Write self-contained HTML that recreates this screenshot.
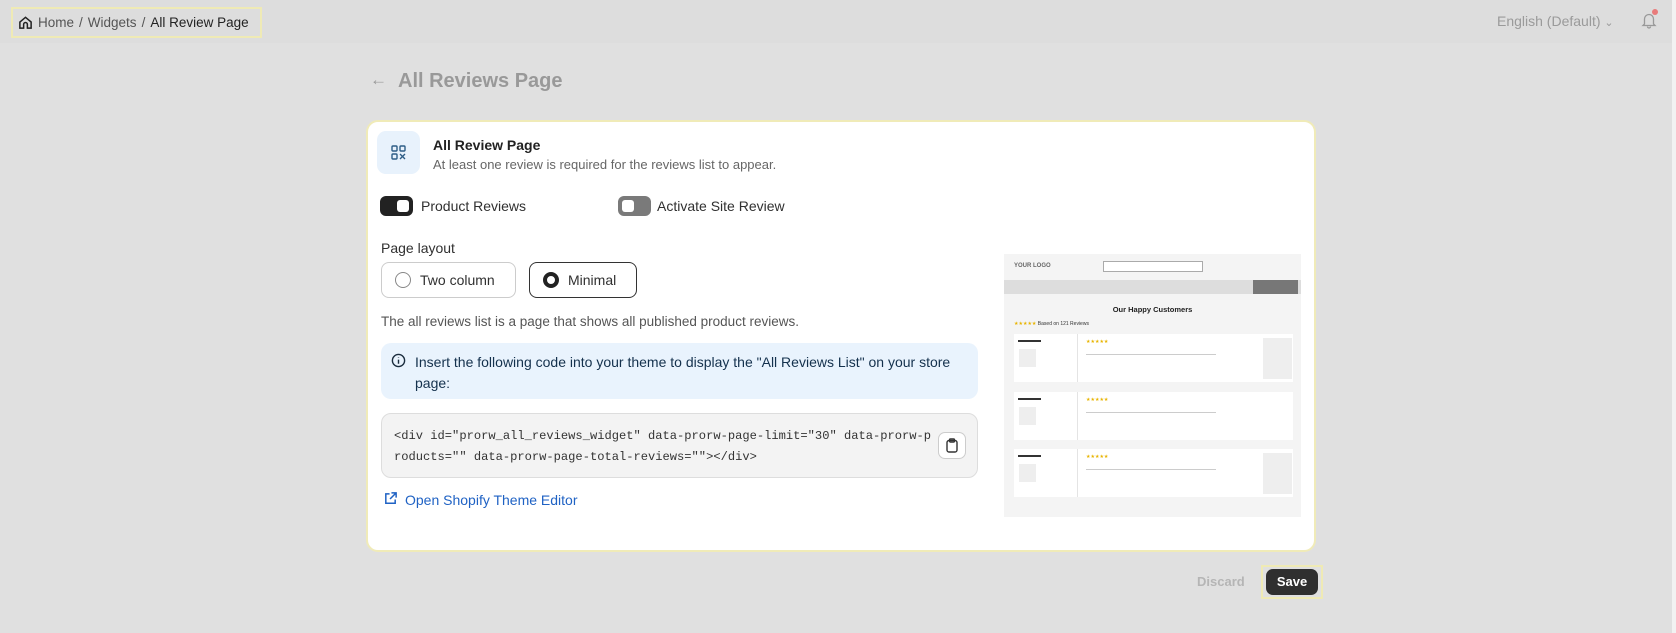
<!DOCTYPE html>
<html><head><meta charset="utf-8"><style>
*{box-sizing:border-box;margin:0;padding:0}
body{width:1676px;height:633px;background:#e0e0e0;font-family:"Liberation Sans",sans-serif;position:relative;overflow:hidden;color:#303030}
.abs{position:absolute}
.bc{left:11px;top:7px;width:251px;height:31px;border:2px solid #efeab5;font-size:13.5px;color:#555;display:flex;align-items:center;padding-left:5px;gap:5px}
.card{left:366px;top:120px;width:950px;height:432px;background:#fff;border:2px solid #f0ebb8;border-radius:12px}
.tog{width:33px;height:20px;border-radius:6px;position:absolute}
.tog i{position:absolute;right:4px;top:4px;width:12px;height:12px;background:#fff;border-radius:3px}
.rb{position:absolute;height:36px;border:1px solid #ccc;border-radius:8px;display:flex;align-items:center;padding-left:13px;gap:9px;font-size:14px}
.t14{font-size:14px}
</style></head><body>
<div class="abs" style="left:0;top:0;width:1676px;height:43px;background:#dddddd"></div>
<div class="abs" style="left:1672px;top:0;width:4px;height:633px;background:#f2f2f2"></div>
<div class="abs bc">
<svg width="15" height="15" viewBox="0 0 16 16" fill="none" stroke="#222" stroke-width="1.6"><path d="M2 7.5L8 2.5l6 5V14h-4v-4a2 2 0 0 0-4 0v4H2z"/></svg>
<span>Home</span><span>/</span><span>Widgets</span><span>/</span><span style="color:#222">All Review Page</span></div>
<div class="abs" style="left:1497px;top:13px;font-size:14px;color:#9a9a9a">English (Default) <span style="font-size:11px">&#8964;</span></div>
<svg class="abs" style="left:1640px;top:11px" width="18" height="18" viewBox="0 0 18 18" fill="none" stroke="#999" stroke-width="1.3"><path d="M4.5 13V8a4.5 4.5 0 0 1 9 0v5l1.5 1.5h-12z M7.5 15.5a1.5 1.5 0 0 0 3 0"/></svg>
<div class="abs" style="left:1652px;top:9px;width:6px;height:6px;border-radius:3px;background:#e87a7a"></div>
<div class="abs" style="left:370px;top:70px;font-size:17px;color:#999">&#8592;</div>
<div class="abs" style="left:398px;top:70px;font-size:20px;font-weight:bold;color:#999">All Reviews Page</div>

<div class="abs card"></div>
<div class="abs" style="left:377px;top:131px;width:43px;height:43px;border-radius:9px;background:#e8f2fc"></div>
<svg class="abs" style="left:391px;top:145px" width="15" height="15" viewBox="0 0 15 15" fill="none" stroke="#2e5d86" stroke-width="1.4"><rect x="1" y="1" width="5" height="5" rx="1"/><rect x="9" y="1" width="5" height="5" rx="1"/><rect x="1" y="9" width="5" height="5" rx="1"/><path d="M9 9l5 5M14 9l-5 5"/></svg>
<div class="abs" style="left:433px;top:137px;font-size:14px;font-weight:bold;color:#222">All Review Page</div>
<div class="abs" style="left:433px;top:157px;font-size:13px;color:#666">At least one review is required for the reviews list to appear.</div>
<div class="tog" style="left:380px;top:196px;background:#222"><i></i></div>
<div class="abs t14" style="left:421px;top:198px">Product Reviews</div>
<div class="tog" style="left:618px;top:196px;background:#7a7a7a"><i style="left:4px;right:auto"></i></div>
<div class="abs t14" style="left:657px;top:198px">Activate Site Review</div>
<div class="abs t14" style="left:381px;top:240px">Page layout</div>
<div class="rb" style="left:381px;top:262px;width:135px"><span style="width:16px;height:16px;border:1px solid #888;border-radius:50%"></span>Two column</div>
<div class="rb" style="left:529px;top:262px;width:108px;border-color:#333"><span style="width:16px;height:16px;border:4.5px solid #222;border-radius:50%"></span>Minimal</div>
<div class="abs" style="left:381px;top:314px;font-size:13.5px;color:#555">The all reviews list is a page that shows all published product reviews.</div>
<div class="abs" style="left:381px;top:343px;width:597px;height:56px;background:#e9f3fd;border-radius:10px"></div>
<svg class="abs" style="left:391px;top:353px" width="15" height="15" viewBox="0 0 16 16" fill="none" stroke="#1a2c3d" stroke-width="1.5"><circle cx="8" cy="8" r="6.5"/><path d="M8 7v4.5M8 4.5v.5"/></svg>
<div class="abs" style="left:415px;top:352px;width:555px;font-size:14px;line-height:21px;color:#14314d">Insert the following code into your theme to display the "All Reviews List" on your store page:</div>
<div class="abs" style="left:381px;top:413px;width:597px;height:65px;background:#f3f3f3;border:1px solid #ddd;border-radius:10px"></div>
<div class="abs" style="left:394px;top:426px;width:540px;font-family:'Liberation Mono',monospace;font-size:12.1px;line-height:21px;color:#333;word-break:break-all">&lt;div id="prorw_all_reviews_widget" data-prorw-page-limit="30" data-prorw-products="" data-prorw-page-total-reviews=""&gt;&lt;/div&gt;</div>
<div class="abs" style="left:938px;top:432px;width:28px;height:27px;background:#fff;border:1px solid #ccc;border-radius:7px"></div>
<svg class="abs" style="left:945px;top:438px" width="14" height="15" viewBox="0 0 14 15" fill="none" stroke="#333" stroke-width="1.4"><rect x="2" y="2.5" width="10" height="11.5" rx="2"/><rect x="4.5" y="1" width="5" height="3" rx="1"/></svg>
<svg class="abs" style="left:383px;top:491px" width="15" height="15" viewBox="0 0 16 16" fill="none" stroke="#1f62c4" stroke-width="1.6"><path d="M7 3H3v10h10V9M9 2h5v5M14 2L7.5 8.5"/></svg>
<div class="abs" style="left:405px;top:492px;font-size:14px;color:#1f62c4">Open Shopify Theme Editor</div>

<div class="abs" style="left:1004px;top:254px;width:297px;height:263px;background:#f4f4f4">
 <div class="abs" style="left:10px;top:9px;font-size:6px;font-weight:bold;color:#666">YOUR LOGO</div>
 <div class="abs" style="left:99px;top:7px;width:100px;height:11px;border:1px solid #aaa;background:#fff"></div>
 <div class="abs" style="left:0;top:26px;width:297px;height:14px;background:#ddd"></div>
 <div class="abs" style="left:249px;top:26px;width:45px;height:14px;background:#777"></div>
 <div class="abs" style="left:0;top:51px;width:297px;text-align:center;font-size:7.5px;font-weight:bold;color:#222">Our Happy Customers</div>
 <div class="abs" style="left:10px;top:67px;font-size:5px;color:#333"><span style="color:#e8b400">★★★★★</span> Based on 121 Reviews</div>
 <div class="abs" style="left:10px;top:80px;width:279px;height:48px;background:#fff"><div class="abs" style="left:63px;top:0;width:1px;height:48px;background:#e4e4e4"></div><div class="abs" style="left:4px;top:6px;width:23px;height:2px;background:#333"></div><div class="abs" style="left:5px;top:15px;width:17px;height:18px;background:#eee"></div><div class="abs" style="left:249px;top:4px;width:29px;height:41px;background:#eee"></div><div class="abs" style="left:72px;top:20px;width:130px;height:1px;background:#ccc"></div><div class="abs" style="left:72px;top:5px;font-size:5px;color:#e8b400">★★★★★</div></div>
 <div class="abs" style="left:10px;top:138px;width:279px;height:48px;background:#fff"><div class="abs" style="left:63px;top:0;width:1px;height:48px;background:#e4e4e4"></div><div class="abs" style="left:4px;top:6px;width:23px;height:2px;background:#333"></div><div class="abs" style="left:5px;top:15px;width:17px;height:18px;background:#eee"></div><div class="abs" style="left:72px;top:20px;width:130px;height:1px;background:#ccc"></div><div class="abs" style="left:72px;top:5px;font-size:5px;color:#e8b400">★★★★★</div></div>
 <div class="abs" style="left:10px;top:195px;width:279px;height:48px;background:#fff"><div class="abs" style="left:63px;top:0;width:1px;height:48px;background:#e4e4e4"></div><div class="abs" style="left:4px;top:6px;width:23px;height:2px;background:#333"></div><div class="abs" style="left:5px;top:15px;width:17px;height:18px;background:#eee"></div><div class="abs" style="left:249px;top:4px;width:29px;height:41px;background:#eee"></div><div class="abs" style="left:72px;top:20px;width:130px;height:1px;background:#ccc"></div><div class="abs" style="left:72px;top:5px;font-size:5px;color:#e8b400">★★★★★</div></div>
</div>

<div class="abs" style="left:1197px;top:574px;font-size:13px;font-weight:bold;color:#b5b5b5">Discard</div>
<div class="abs" style="left:1261px;top:565px;width:62px;height:34px;border:2px solid #efeab5"></div>
<div class="abs" style="left:1266px;top:569px;width:52px;height:26px;background:#2f2f2f;border-radius:7px;color:#fff;font-size:13px;font-weight:bold;text-align:center;line-height:26px">Save</div>
</body></html>
